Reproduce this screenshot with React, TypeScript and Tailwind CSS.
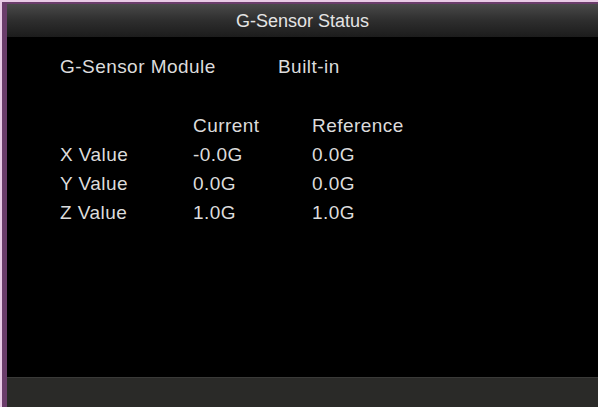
import { Fragment } from 'react';

const rows = [
  { label: 'X Value', current: '-0.0G', reference: '0.0G' },
  { label: 'Y Value', current: '0.0G', reference: '0.0G' },
  { label: 'Z Value', current: '1.0G', reference: '1.0G' },
];

export default function App() {
  return (
    <div className="h-[407px] w-[598px] overflow-hidden bg-[#e9cbe6] pl-[2px] pt-[2px] font-['Liberation_Sans',Arial,sans-serif]">
      <div className="flex h-full flex-col border-l-[5px] border-t-2 border-[#6b3d6b] bg-black">
        {/* Title bar */}
        <div className="flex h-[33px] shrink-0 items-center justify-center bg-gradient-to-b from-[#4a4a4a] via-[#2e2e2e] to-[#1c1c1c] pt-[1px] text-[18px] text-[#e4e4e4]">
          G-Sensor Status
        </div>

        {/* Body */}
        <div className="flex-1 bg-black pl-[53px] pt-[15px] text-[19px] leading-[29px] tracking-[0.45px] text-[#dcdcdc]">
          <div className="grid grid-cols-[218px_1fr]">
            <span>G-Sensor Module</span>
            <span>Built-in</span>
          </div>

          <div className="mt-[30px] grid grid-cols-[133px_119px_1fr]">
            <span />
            <span>Current</span>
            <span>Reference</span>
            {rows.map((r) => (
              <Fragment key={r.label}>
                <span>{r.label}</span>
                <span>{r.current}</span>
                <span>{r.reference}</span>
              </Fragment>
            ))}
          </div>
        </div>

        {/* Bottom bar */}
        <div className="h-[30px] shrink-0 border-t border-[#3a3a38] bg-[#2a2a28]" />
      </div>
    </div>
  );
}
